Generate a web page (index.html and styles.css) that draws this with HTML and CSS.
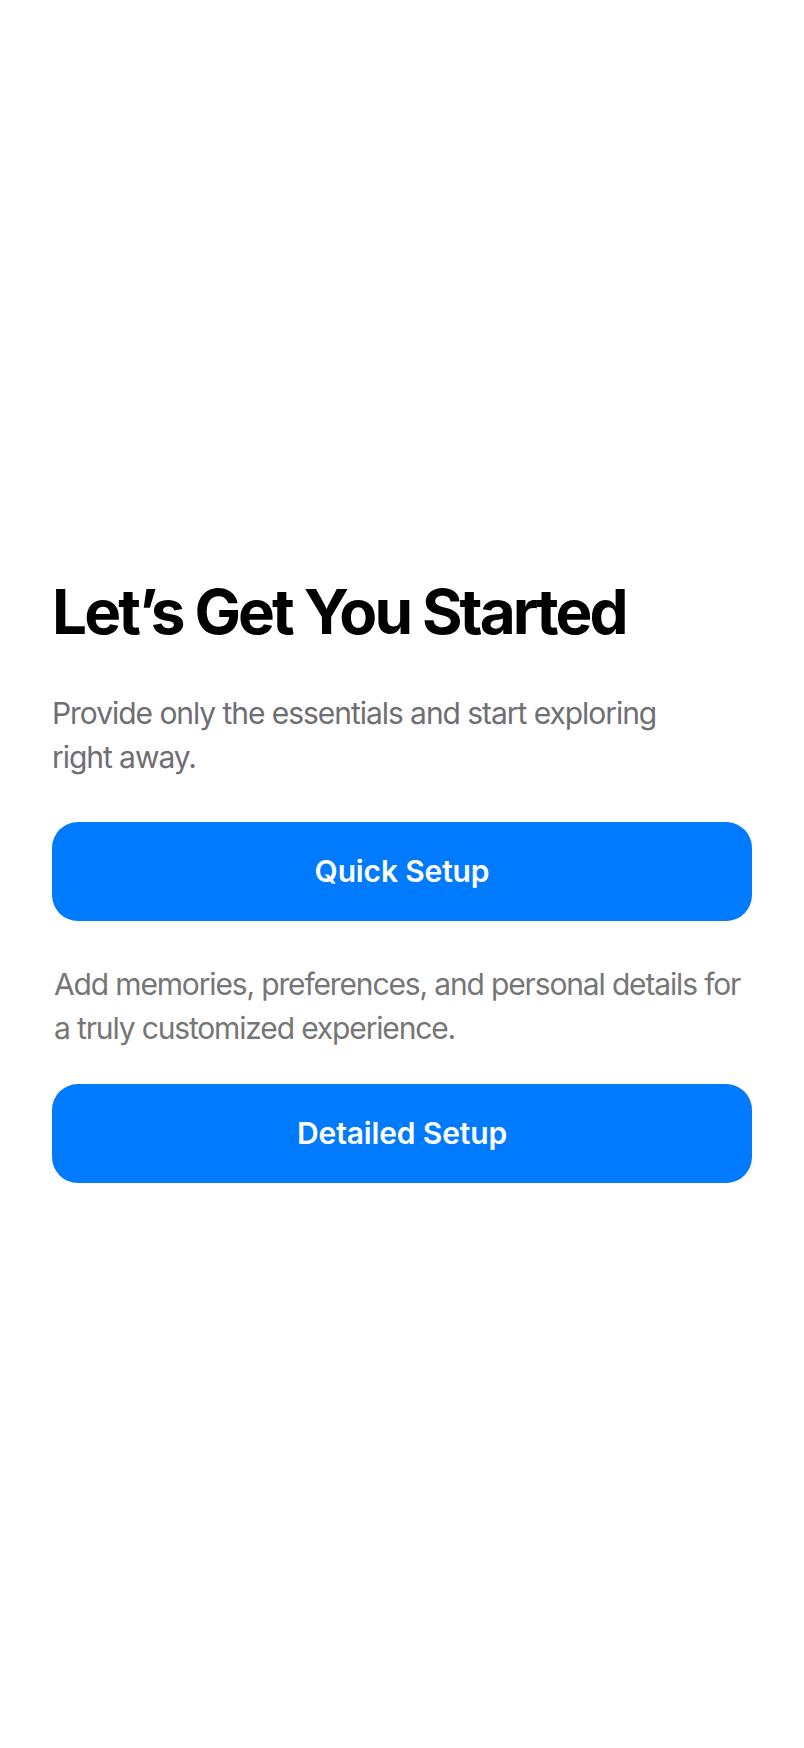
FILE: index.html
```html
<!DOCTYPE html>
<html lang="en">
<head>
<meta charset="utf-8">
<title>Let’s Get You Started</title>
<link rel="stylesheet" href="styles.css">
</head>
<body>
<main class="screen">
  <h1 class="title">Let’s Get You Started</h1>
  <p class="lead">Provide only the essentials and start exploring right away.</p>
  <button class="cta" type="button">Quick Setup</button>
  <p class="lead lead--alt">Add memories, preferences, and personal details for a truly customized experience.</p>
  <button class="cta cta--last" type="button">Detailed Setup</button>
</main>
</body>
</html>
```
FILE: styles.css
```css
html, body {
  margin: 0;
  padding: 0;
  background: #ffffff;
}

body {
  font-family: Inter, "Noto Sans", "Liberation Sans", sans-serif;
  -webkit-font-smoothing: antialiased;
}

.screen {
  box-sizing: border-box;
  min-height: 100vh;
  padding: 7px 52px 0;
  display: flex;
  flex-direction: column;
  justify-content: center;
}

.title {
  margin: 0;
  font-size: 62px;
  line-height: 77px;
  font-weight: 700;
  letter-spacing: -2.9px;
  color: #000000;
}

.lead {
  margin: 41px 0 0;
  max-width: 620px;
  font-size: 30px;
  line-height: 44px;
  font-weight: 400;
  letter-spacing: -1.05px;
  color: #6e6e73;
}

.lead--alt {
  max-width: none;
  padding-left: 2px;
  letter-spacing: -1.15px;
  color: #767676;
}

.cta {
  display: flex;
  align-items: center;
  justify-content: center;
  width: 100%;
  height: 99px;
  margin: 43px 0 0;
  padding: 0;
  border: 0;
  border-radius: 26px;
  background: #007aff;
  color: #ffffff;
  font-family: inherit;
  font-size: 30px;
  font-weight: 600;
  letter-spacing: -0.15px;
}

.cta--last {
  margin-top: 34px;
}
```
